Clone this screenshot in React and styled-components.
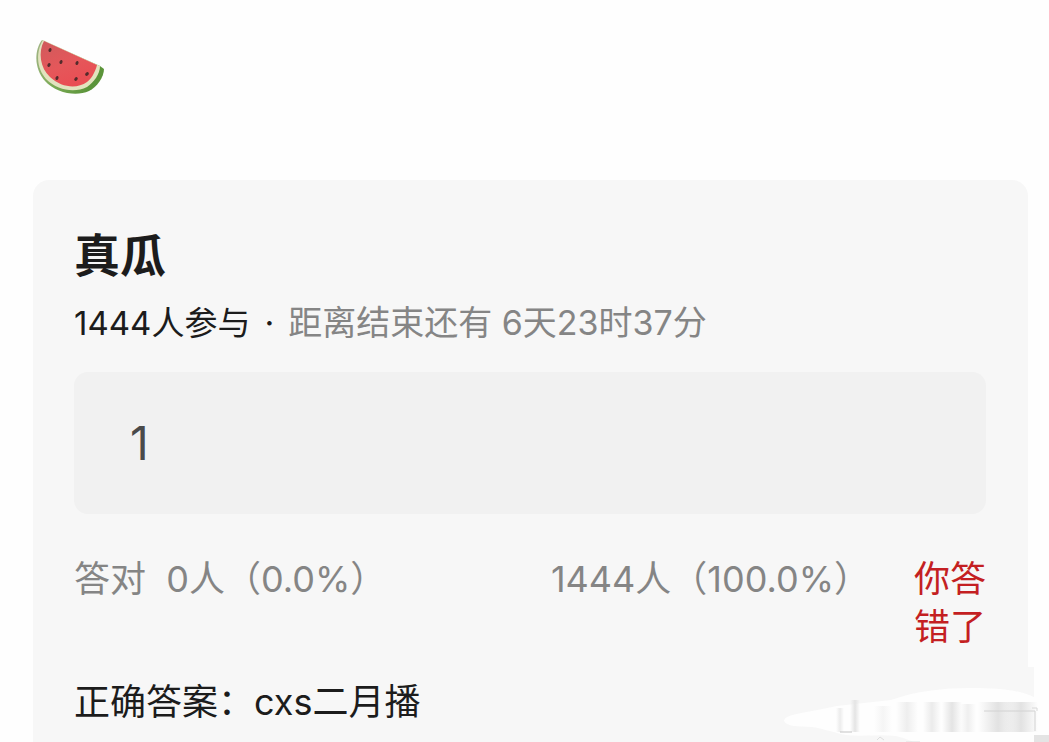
import React from "react";
import styled, { createGlobalStyle } from "styled-components";

const GlobalStyle = createGlobalStyle`
  * {
    box-sizing: border-box;
  }

  body {
    margin: 0;
    background: #fefefe;
    font-family: Inter, "Noto Sans CJK SC", sans-serif;
    color: #1c1c1c;
  }
`;

const Page = styled.main`
  position: relative;
  display: flex;
  flex-direction: column;
  min-height: 100vh;
  padding: 36px 21px 0 33px;
  overflow: hidden;
`;

const Post = styled.div`
  height: 144px;
`;

const Melon = styled.svg`
  display: block;
  width: 72px;
  height: 60px;
`;

const Card = styled.section`
  flex: 1;
  display: flex;
  flex-direction: column;
  padding: 48px 42px 16px 41px;
  border-radius: 16px 16px 0 0;
  background: #f7f7f7;
`;

const Title = styled.h1`
  margin: 0;
  font-size: 46px;
  font-weight: 600;
  line-height: 54px;
`;

const Meta = styled.p`
  display: flex;
  gap: 14px;
  margin: 16px 0 24px;
  font-size: 34px;
  line-height: 50px;
`;

const Count = styled.span`
  font-size: 33px;
`;

const Muted = styled.span`
  color: #858585;
`;

const AnswerInput = styled.input`
  width: 100%;
  height: 142px;
  padding: 0 56px;
  border: 0;
  border-radius: 14px;
  outline: none;
  background: #f1f1f1;
  color: #4a4a4a;
  font: inherit;
  font-size: 46px;
`;

const Results = styled.div`
  display: flex;
  justify-content: space-between;
  margin-top: 41px;
  color: #858585;
  font-size: 36px;
  line-height: 48px;
`;

const Wrong = styled.div`
  display: flex;
  gap: 44px;
`;

const Verdict = styled.strong`
  width: 72px;
  color: #c41f22;
  font-weight: 400;
`;

const Correct = styled.p`
  margin: 25px 0 0;
  font-size: 36px;
  line-height: 52px;
`;

const Smudge = styled.svg`
  position: absolute;
  right: 0;
  bottom: 0;
  width: 279px;
  height: 92px;
  pointer-events: none;
`;

const seeds = [
  [17, 14, 20],
  [28, 26, 20],
  [44, 27, 20],
  [16, 29, 30],
  [54, 38, 50],
  [24, 42, 20],
  [43, 43, 40],
];

const streaks = [
  [66, 56, 8, "#ececec"],
  [80, 48, 10, "#e4e4e4"],
  [104, 54, 18, "#f5f5f5"],
  [126, 50, 22, "#eeeeee"],
  [153, 50, 18, "#ebebeb"],
  [172, 50, 20, "#e4e4e4"],
  [190, 52, 16, "#efefef"],
  [208, 50, 40, "#e2e2e2"],
  [234, 50, 34, "#e2e2e2"],
];

const Watermelon = () => (
  <Melon viewBox="0 0 72 60" role="img" aria-label="西瓜">
    <defs>
      <linearGradient id="flesh" x1="0" y1="0" x2="0.5" y2="1">
        <stop offset="0" stopColor="#cf5b5c" />
        <stop offset="0.6" stopColor="#e5575a" />
        <stop offset="1" stopColor="#e94e54" />
      </linearGradient>
      <linearGradient id="rind" x1="0" y1="0" x2="1" y2="0.4">
        <stop offset="0" stopColor="#a3b587" />
        <stop offset="0.5" stopColor="#7bab56" />
        <stop offset="1" stopColor="#5b943a" />
      </linearGradient>
    </defs>
    <path d="M9 4C1 14 1 33 12 45c11 12 31 16 44 10 8-4 15-14 15-22l-4-3Z" fill="url(#rind)" />
    <path d="M10 4C3 15 3 32 13 43c12 12 29 14 41 8 7-5 13-13 13-21Z" fill="#e2e3bf" />
    <path d="M11 5C5 16 7 32 17 41c12 11 27 12 37 5 4-3 8-9 10-17Z" fill="url(#flesh)" />
    {seeds.map(([x, y, angle]) => (
      <ellipse
        key={`${x}-${y}`}
        cx={x}
        cy={y}
        rx="1.5"
        ry="2.1"
        fill="#542b2b"
        transform={`rotate(${angle} ${x} ${y})`}
      />
    ))}
  </Melon>
);

const Watermark = () => (
  <Smudge viewBox="0 0 279 92" aria-hidden="true">
    <defs>
      {streaks.map(([x, , , color]) => (
        <linearGradient key={x} id={`streak-${x}`}>
          <stop offset="0" stopColor={color} stopOpacity="0" />
          <stop offset="0.5" stopColor={color} />
          <stop offset="1" stopColor={color} stopOpacity="0" />
        </linearGradient>
      ))}
    </defs>
    <path d="M257 15h7v77h-7Z" fill="#f7f7f7" />
    <path
      d="M14 69c1-6 13-7 28-10 9-2 17-3 25-5l54-6c25-9 52-12 80-12 28 0 48 2 63 9v38h2v9H151c-9-2-16-6-25-8-18-2-35 1-50-1-11-2-21-6-34-8-14-1-25 0-28-6Z"
      fill="#fefefe"
    />
    {streaks.map(([x, y, width]) => (
      <rect key={x} x={x} y={y} width={width} height={80 - y} fill={`url(#streak-${x})`} />
    ))}
    <path d="M70 80h12" stroke="#c4c4c4" />
    <path d="M214 59h51v20" fill="none" stroke="#d2d2d2" />
    <path d="M262 56h5v3" fill="none" stroke="#d8d8d8" />
    <path d="M107 88l3-3 4 3M136 90h14" fill="none" stroke="#dedede" />
    <path d="M264 83h15v9h-15Z" fill="#e4e4e4" />
  </Smudge>
);

const App = () => {
  return (
    <>
      <GlobalStyle />
      <Page>
        <Post>
          <Watermelon />
        </Post>
        <Card>
          <Title>真瓜</Title>
          <Meta>
            <Count>1444人参与</Count>
            <span>·</span>
            <Muted>距离结束还有 6天23时37分</Muted>
          </Meta>
          <AnswerInput aria-label="真瓜" value="1" readOnly />
          <Results>
            <span>答对&nbsp; 0人（0.0%）</span>
            <Wrong>
              <span>1444人（100.0%）</span>
              <Verdict>你答错了</Verdict>
            </Wrong>
          </Results>
          <Correct>正确答案：cxs二月播</Correct>
        </Card>
        <Watermark />
      </Page>
    </>
  );
};

export default App;
